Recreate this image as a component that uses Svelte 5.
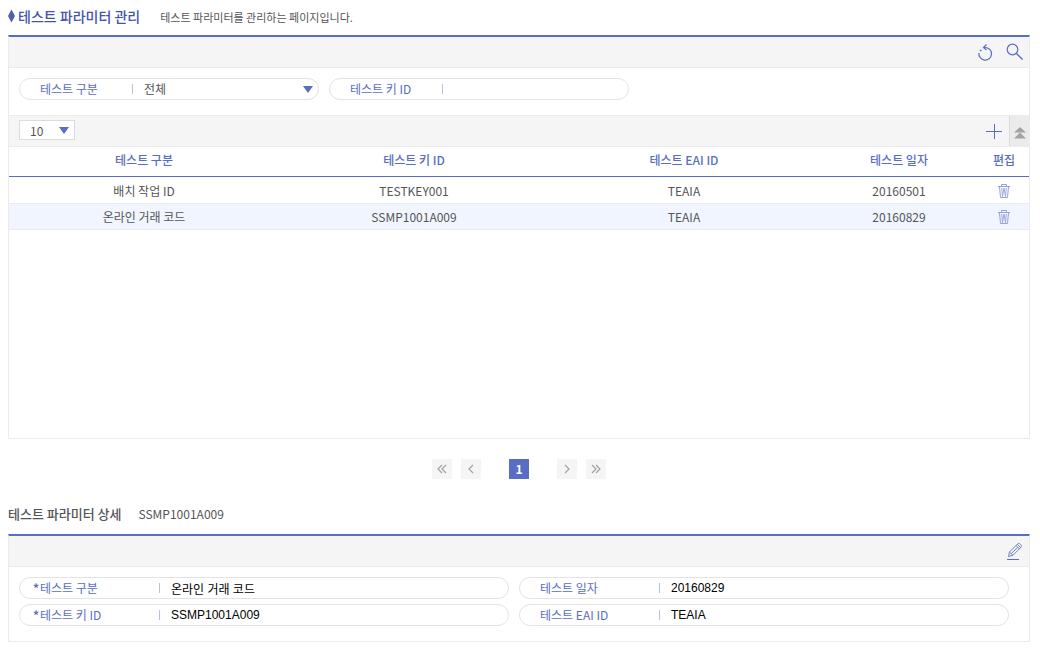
<script lang="ts">
	type Param = { type: string; key: string; eai: string; date: string };

	const params: Param[] = [
		{ type: "배치 작업 ID", key: "TESTKEY001", eai: "TEAIA", date: "20160501" },
		{ type: "온라인 거래 코드", key: "SSMP1001A009", eai: "TEAIA", date: "20160829" },
	];

	let selected = $state(1);
	let open = $state(true);
	let keyword = $state("");

	const detail = $derived(params[selected]);
	const fields = $derived([
		{ id: "type", label: "테스트 구분", value: detail.type, required: true },
		{ id: "date", label: "테스트 일자", value: detail.date, required: false },
		{ id: "key", label: "테스트 키 ID", value: detail.key, required: true },
		{ id: "eai", label: "테스트 EAI ID", value: detail.eai, required: false },
	]);
</script>

<main>
	<header class="title">
		<svg class="diamond" width="7" height="14" viewBox="0 0 7 14"><path d="M3.5 0.5 7 7 3.5 13.5 0 7z" fill="#4f5fb5" /></svg>
		<h1>테스트 파라미터 관리</h1>
		<p>테스트 파라미터를 관리하는 페이지입니다.</p>
	</header>

	<section class="panel list">
		<div class="bar actions">
			<button type="button" aria-label="초기화" onclick={() => (keyword = "")}>
				<svg width="20" height="20" viewBox="0 0 20 20" fill="none" stroke="#5a6dc4" stroke-width="1.2">
					<path d="M9 5.500h1.500c4 .5 6.500 3.500 6 7a6.300 6.300 0 0 1-12.600-1.500" />
					<path d="M11.500 2.500 8.500 5.500l3 2.500" />
					<path d="M4.800 8.500h1.700" stroke-width="1.500" />
				</svg>
			</button>
			<button type="button" aria-label="조회">
				<svg width="20" height="20" viewBox="0 0 20 20" fill="none" stroke="#5a6dc4">
					<circle cx="7.500" cy="7.500" r="5.300" stroke-width="1.200" />
					<path d="m11.400 11.400 6.200 6.200" stroke-width="1.400" />
				</svg>
			</button>
		</div>

		<form class="search">
			<div class="pill select">
				<label for="s-type">테스트 구분</label>
				<select id="s-type">
					<option>전체</option>
					<option>배치 작업 ID</option>
					<option>온라인 거래 코드</option>
				</select>
			</div>
			<div class="pill">
				<label for="s-key">테스트 키 ID</label>
				<input id="s-key" type="text" bind:value={keyword} />
			</div>
		</form>

		<div class="bar tools">
			<div class="size select">
				<select aria-label="목록 수">
					<option>10</option>
					<option>20</option>
					<option>50</option>
				</select>
			</div>
			<button type="button" class="add" aria-label="추가">
				<svg width="20" height="20" viewBox="0 0 20 20"><path d="M2 10.5h16M10.5 3v15" stroke="#5a6dc4" /></svg>
			</button>
			<button type="button" class="fold" aria-label="접기" onclick={() => (open = !open)}>
				<svg width="12" height="12" viewBox="0 0 12 12" fill="#a3a3a3"><path d="m6 0 6 5.5H0zM6 5.500l6 6H0z" /></svg>
			</button>
		</div>

		{#if open}
			<table>
				<colgroup>
					<col />
					<col />
					<col />
					<col class="c-date" />
					<col class="c-edit" />
				</colgroup>
				<thead>
					<tr>
						<th>테스트 구분</th>
						<th>테스트 키 ID</th>
						<th>테스트 EAI ID</th>
						<th>테스트 일자</th>
						<th>편집</th>
					</tr>
				</thead>
				<tbody>
					{#each params as p, i (p.key)}
						<tr class:on={i === selected} onclick={() => (selected = i)}>
							<td>{p.type}</td>
							<td>{p.key}</td>
							<td>{p.eai}</td>
							<td>{p.date}</td>
							<td>
								<button type="button" aria-label="삭제">
									<svg width="14" height="16" viewBox="0 0 14 16" fill="none" stroke="#95a1db">
										<path d="M1 3.500h12M4.500 3.500v-2h5v2" />
										<path d="m2.500 4 1 10.500h7L11.500 4" />
										<path d="m4.700 5 .8 8.500L7 5l1.500 8.500.8-8.500" stroke-width="0.900" />
									</svg>
								</button>
							</td>
						</tr>
					{/each}
				</tbody>
			</table>
		{/if}
	</section>

	<nav aria-label="페이지">
		<button type="button" aria-label="처음">
			<svg width="10" height="10" viewBox="0 0 10 10"><path d="M5 1 1 5l4 4M9 1 5 5l4 4" /></svg>
		</button>
		<button type="button" aria-label="이전">
			<svg width="10" height="10" viewBox="0 0 10 10"><path d="M7 1 3 5l4 4" /></svg>
		</button>
		<button type="button" class="current" aria-current="page">1</button>
		<button type="button" aria-label="다음">
			<svg width="10" height="10" viewBox="0 0 10 10"><path d="m3 1 4 4-4 4" /></svg>
		</button>
		<button type="button" aria-label="마지막">
			<svg width="10" height="10" viewBox="0 0 10 10"><path d="m1 1 4 4-4 4M5 1l4 4-4 4" /></svg>
		</button>
	</nav>

	<header class="subtitle">
		<h2>테스트 파라미터 상세</h2>
		<span>{detail.key}</span>
	</header>

	<section class="panel">
		<div class="bar actions">
			<button type="button" aria-label="수정">
				<svg width="20" height="20" viewBox="0 0 20 20" fill="none" stroke="#7282cc">
					<path d="m3.500 15.500 1-4.500 8.300-8.300c1.300-1.300 4.700 1.700 3.400 3.300L8 14.200z" />
					<path d="m11 4.500 3.600 3.600M12.300 3.200l3.600 3.600M4.500 11.200l3.400 3M6.300 12.700l6.600-6.600" />
					<path d="M2 18.500h12" stroke="#5a6dc4" />
				</svg>
			</button>
		</div>
		<form class="detail">
			{#each fields as f (f.id)}
				<div class="pill">
					<label for="d-{f.id}" class:required={f.required}>{f.label}</label>
					<input id="d-{f.id}" type="text" readonly value={f.value} />
				</div>
			{/each}
		</form>
	</section>
</main>

<style>
	:global(body) {
		margin: 0;
		background: #fff;
	}

	main {
		padding: 6px 10px 14px 8px;
		font-family: "Noto Sans CJK KR", "Noto Sans", sans-serif;
		font-size: 12px;
		line-height: 18px;
		color: #555;
	}

	main :global(*) {
		box-sizing: border-box;
	}

	h1,
	h2,
	p {
		margin: 0;
	}

	button,
	select,
	input {
		margin: 0;
		padding: 0;
		border: 0;
		background: none;
		font: inherit;
		color: inherit;
		outline: 0;
	}

	button {
		display: flex;
		align-items: center;
		justify-content: center;
		cursor: pointer;
	}

	.title,
	.subtitle {
		display: flex;
		align-items: center;
	}

	.title {
		height: 29px;
		padding-bottom: 10px;
	}

	h1 {
		margin: 0 20px 0 3px;
		font-size: 14px;
		font-weight: 500;
		color: #4654a8;
	}

	.title p {
		padding-top: 2px;
		font-size: 11px;
	}

	.panel {
		border: 1px solid #ebebeb;
		border-top: 2px solid #5a6dc4;
	}

	.list {
		min-height: 404px;
	}

	.bar {
		display: flex;
		align-items: center;
		height: 31px;
		background: #f5f5f5;
		border-bottom: 1px solid #ebebeb;
	}

	.actions {
		justify-content: flex-end;
		gap: 10px;
		padding-right: 4px;
	}

	.search {
		display: flex;
		flex-wrap: wrap;
		gap: 10px;
		padding: 10px 10px 15px;
	}

	.search .pill {
		width: 300px;
	}

	.pill {
		display: flex;
		align-items: center;
		height: 22px;
		border: 1px solid #e3e3e3;
		border-radius: 11px;
		background: #fff;
	}

	.pill label {
		position: relative;
		flex: none;
		width: 113px;
		padding-left: 20px;
		color: #5a6dc4;
	}

	.pill label::after {
		content: "";
		position: absolute;
		top: 4px;
		right: 0;
		height: 10px;
		border-right: 1px solid #b9c0e6;
	}

	.pill input,
	.pill select {
		flex: 1;
		min-width: 0;
		height: 20px;
		padding: 0 11px;
	}

	.select {
		position: relative;
	}

	.select select {
		appearance: none;
	}

	.select::after {
		content: "";
		position: absolute;
		top: 7px;
		right: 5px;
		border: 5px solid transparent;
		border-top: 7px solid #5a6dc4;
		border-bottom: 0;
		pointer-events: none;
	}

	.tools {
		height: 32px;
		border-top: 1px solid #ebebeb;
		padding-left: 10px;
	}

	.size {
		width: 56px;
		height: 20px;
		margin: 0 auto 2px 0;
		border: 1px solid #dcdcdc;
		background: #fff;
	}

	.size select {
		display: block;
		width: 100%;
		height: 20px;
		padding-left: 10px;
	}

	.size::after {
		top: 6px;
	}

	.add {
		margin-right: 5px;
	}

	.fold {
		width: 20px;
		height: 30px;
		padding-top: 4px;
		background: #ebebeb;
		border-left: 1px solid #dcdcdc;
	}

	table {
		width: 100%;
		table-layout: fixed;
		border-spacing: 0;
		text-align: center;
	}

	.c-date {
		width: 160px;
	}

	.c-edit {
		width: 50px;
	}

	th {
		height: 30px;
		padding: 0 0 4px;
		border-bottom: 1px solid #5a6dc4;
		font-weight: 500;
		color: #5a6dc4;
	}

	td {
		height: 26px;
		padding: 1px 0 0;
		border-bottom: 1px solid #ebebeb;
	}

	tr:first-child td {
		height: 27px;
	}

	td button {
		margin: 0 auto;
	}

	.on {
		background: #f1f5ff;
	}

	nav {
		display: flex;
		justify-content: center;
		gap: 9px;
		margin-top: 20px;
	}

	nav button {
		width: 20px;
		height: 20px;
		background: #f5f5f5;
	}

	nav svg {
		fill: none;
		stroke: #a3a3a3;
		stroke-width: 1.2;
	}

	nav .current {
		margin: 0 19px;
		background: #5a6dc4;
		font-weight: 700;
		color: #fff;
	}

	.subtitle {
		height: 55px;
		padding-top: 15px;
	}

	h2 {
		margin-right: 17px;
		font-size: 13px;
		font-weight: 500;
	}

	.detail {
		display: grid;
		grid-template-columns: 1fr 1fr;
		gap: 5px 10px;
		padding: 10px 20px 15px 10px;
	}

	.detail label {
		width: 140px;
	}

	.detail input {
		font-family: "Liberation Sans", "Noto Sans CJK KR", sans-serif;
		color: #000;
	}

	.pill .required {
		padding-left: 13px;
	}

	.required::before {
		content: "*";
		display: inline-block;
		width: 7px;
		font-weight: 700;
	}
</style>
